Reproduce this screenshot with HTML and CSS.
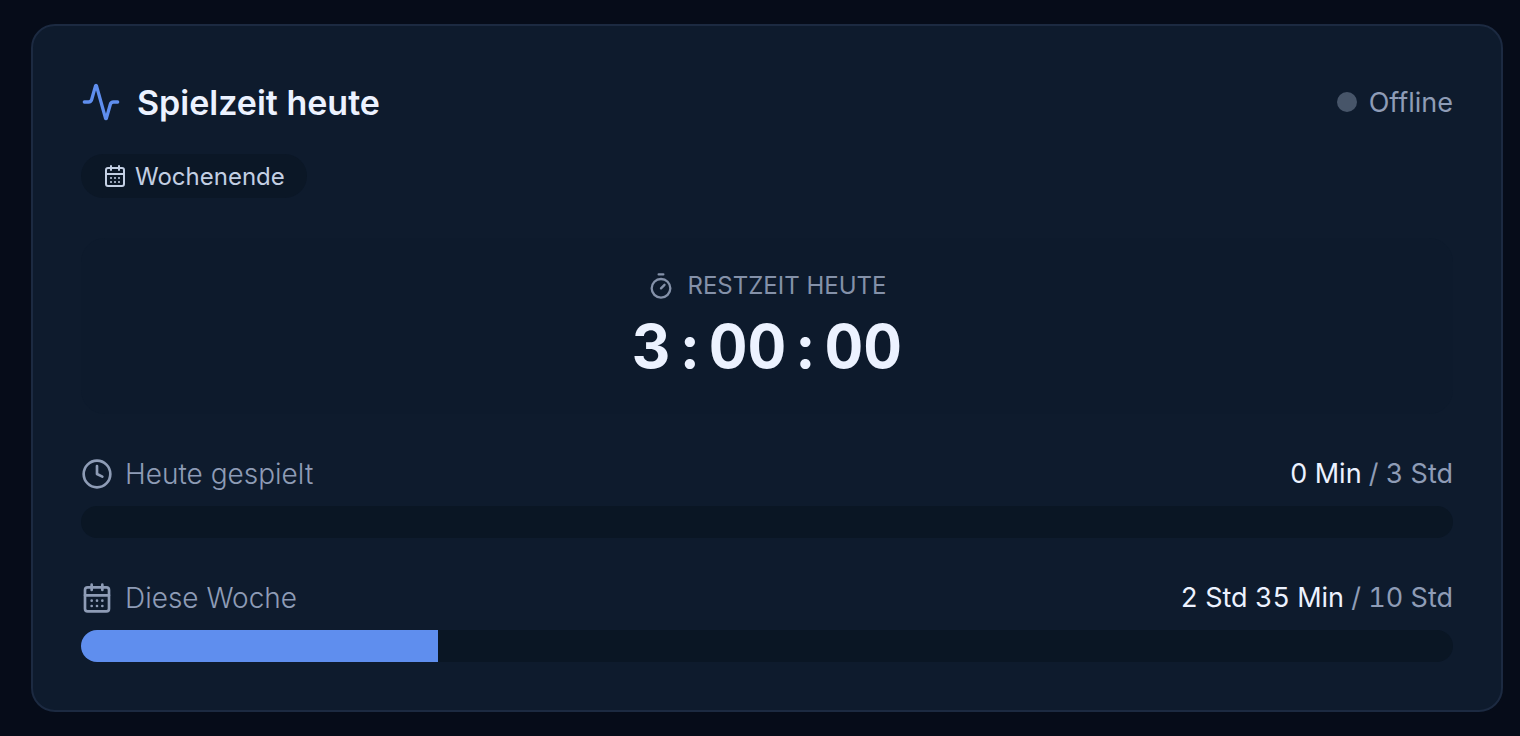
FILE: index.html
```
<!DOCTYPE html>
<html lang="de">
<head>
  <meta charset="UTF-8">
  <meta name="viewport" content="width=device-width, initial-scale=1.0">
  <title>Spielzeit heute</title>
  <link rel="stylesheet" href="styles.css">
</head>
<body>

  <section class="card">
    <header class="card-header">
      <h2 class="card-title">
        <svg class="icon icon-lg" viewBox="0 0 24 24"><path d="M22 12h-2.500a2 2 0 0 0-1.930 1.460l-2.350 8.360a.25.25 0 0 1-.48 0L9.240 2.180a.25.25 0 0 0-.48 0l-2.350 8.360A2 2 0 0 1 4.490 12H2"/></svg>
        Spielzeit heute
      </h2>
      <div class="status"><span class="status-dot"></span>Offline</div>
    </header>

    <div class="badge">
      <svg class="icon icon-sm" viewBox="0 0 24 24"><path d="M8 2v4M16 2v4M3 10h18M8 14h.01M12 14h.01M16 14h.01M8 18h.01M12 18h.01M16 18h.01"/><rect x="3" y="4" width="18" height="18" rx="2"/></svg>
      Wochenende
    </div>

    <div class="timer">
      <div class="timer-label">
        <svg class="icon icon-md" viewBox="0 0 24 24"><path d="M10 2h4M12 14l3-3"/><circle cx="12" cy="14" r="8"/></svg>
        Restzeit heute
      </div>
      <div class="timer-value">3<span class="colon">:</span>00<span class="colon">:</span>00</div>
    </div>

    <div class="usage">
      <div class="usage-row">
        <span class="usage-label" id="label-today">
          <svg class="icon" viewBox="0 0 24 24"><circle cx="12" cy="12" r="10"/><path d="M12 6v6l4 2"/></svg>
          Heute gespielt
        </span>
        <span class="usage-value"><strong>0 Min</strong> / 3 Std</span>
      </div>
      <div class="bar" role="progressbar" aria-labelledby="label-today" aria-valuenow="0">
        <div class="bar-fill" style="width: 0%"></div>
      </div>
    </div>

    <div class="usage">
      <div class="usage-row">
        <span class="usage-label" id="label-week">
          <svg class="icon" viewBox="0 0 24 24"><path d="M8 2v4M16 2v4M3 10h18M8 14h.01M12 14h.01M16 14h.01M8 18h.01M12 18h.01M16 18h.01"/><rect x="3" y="4" width="18" height="18" rx="2"/></svg>
          Diese Woche
        </span>
        <span class="usage-value"><strong>2 Std 35 Min</strong> / 10 Std</span>
      </div>
      <div class="bar" role="progressbar" aria-labelledby="label-week" aria-valuenow="26">
        <div class="bar-fill" style="width: 26%"></div>
      </div>
    </div>
  </section>

</body>
</html>
```
FILE: styles.css
```
* {
  box-sizing: border-box;
}

body {
  margin: 0;
  padding: 24px 17px 24px 31px;
  background-color: #060c19;
  color: #ecf2ff;
  font-family: 'Inter', Arial, sans-serif;
}

.card {
  padding: 48px;
  background-color: #0e1b2d;
  border: 2px solid #1c2a41;
  border-radius: 24px;
}

.card-header {
  display: flex;
  justify-content: space-between;
  align-items: center;
  height: 56px;
}

.card-title {
  display: flex;
  align-items: center;
  gap: 16px;
  margin: 0;
  font-size: 34px;
  font-weight: 600;
}

.icon {
  flex: none;
  width: 32px;
  height: 32px;
  fill: none;
  stroke: currentColor;
  stroke-width: 2;
  stroke-linecap: round;
  stroke-linejoin: round;
}

.icon-lg {
  width: 40px;
  height: 40px;
  color: #5f8eee;
}

.icon-md {
  width: 28px;
  height: 28px;
}

.icon-sm {
  width: 24px;
  height: 24px;
}

.status {
  display: flex;
  align-items: center;
  gap: 12px;
  color: #8e9cb6;
  font-size: 27px;
}

.status-dot {
  width: 20px;
  height: 20px;
  border-radius: 50%;
  background-color: #475569;
}

.badge {
  display: flex;
  align-items: center;
  gap: 8px;
  width: fit-content;
  height: 44px;
  margin-top: 24px;
  padding: 0 22px;
  border-radius: 22px;
  background-color: #0b1726;
  color: #c3cfe3;
  font-size: 24px;
}

.timer {
  margin-top: 40px;
  padding: 32px;
  border-radius: 24px;
  background-color: #0d1a2c;
  text-align: center;
}

.timer-label {
  display: flex;
  justify-content: center;
  align-items: center;
  gap: 12px;
  color: #8491a9;
  font-size: 24px;
  line-height: 32px;
  text-transform: uppercase;
}

.timer-value {
  margin-top: 8px;
  font-size: 60px;
  font-weight: 700;
  line-height: 72px;
  font-variant-numeric: tabular-nums;
}

/* colons take the same width as a digit */
.colon {
  display: inline-block;
  width: 38px;
}

.usage {
  margin-top: 40px;
}

.usage-row {
  display: flex;
  justify-content: space-between;
  align-items: center;
  margin-bottom: 12px;
  color: #8e9cb6;
  font-size: 28px;
  line-height: 40px;
}

.usage-label {
  display: flex;
  align-items: center;
  gap: 12px;
  font-weight: 300;
}

.usage-value {
  font-size: 27px;
  font-variant-numeric: tabular-nums;
}

.usage-value strong {
  color: #ecf2ff;
  font-weight: 400;
}

.bar {
  height: 32px;
  border-radius: 16px;
  background-color: #0a1624;
  overflow: hidden;
}

.bar-fill {
  height: 100%;
  background-color: #5f8eee;
}
```
